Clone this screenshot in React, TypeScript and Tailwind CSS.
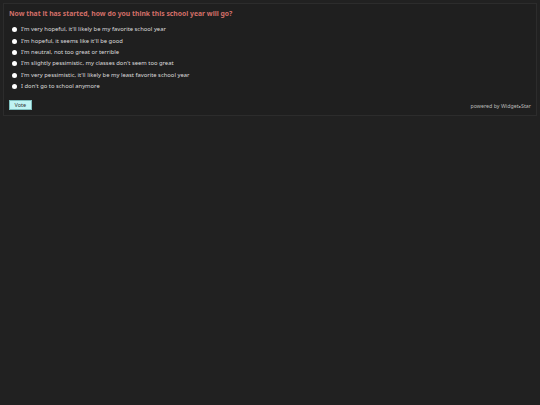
import React from 'react';

const options = [
  "I'm very hopeful, it'll likely be my favorite school year",
  "I'm hopeful, it seems like it'll be good",
  "I'm neutral, not too great or terrible",
  "I'm slightly pessimistic, my classes don't seem too great",
  "I'm very pessimistic, it'll likely be my least favorite school year",
  "I don't go to school anymore",
];

export default function App() {
  return (
    <div className="min-h-[405px] w-full bg-[#212121] p-[3px] font-['Noto_Sans','Open_Sans',sans-serif]">
      <div className="border border-[#2c2c2c] bg-[#1f1f1f] px-[5px] pt-[5px] pb-[5px]">
        <h2 className="text-[6.8px] font-bold leading-[10px] text-[#d46f69]">
          Now that it has started, how do you think this school year will go?
        </h2>
        <div className="mt-[5px] flex flex-col">
          {options.map((o, i) => (
            <label key={i} className="flex h-[11.4px] items-center gap-[4px] text-[5.85px] font-normal text-[#dcdcdc]">
              <span className="ml-[3px] inline-block h-[5px] w-[5px] rounded-full bg-white" />
              {o}
            </label>
          ))}
        </div>
        <div className="mt-[8px] flex items-end justify-between">
          <button className="border border-[#7fbfbf] bg-[#bff3f3] px-[4.5px] text-[5.5px] leading-[8px] text-[#333]">
            Vote
          </button>
          <span className="text-[5.3px] leading-[7px] text-[#bbbbbb]">
            powered by Widget<span className="text-[4px]">●</span>Star
          </span>
        </div>
      </div>
    </div>
  );
}
